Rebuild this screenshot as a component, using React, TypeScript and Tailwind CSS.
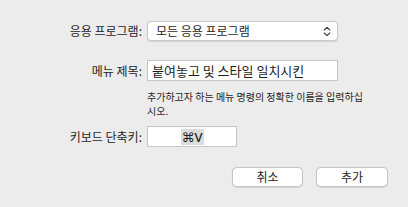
export default function App() {
  return (
    <div
      className="h-[207px] w-[408px] bg-[#ececec] text-[12px] text-[#1e1e1e]"
      style={{ fontFamily: '"Noto Sans CJK KR", "Noto Sans", sans-serif' }}
    >
      <div className="flex flex-col pt-[21px]">
        {/* 응용 프로그램 */}
        <div className="flex items-center gap-[5px]">
          <div className="w-[142px] text-right leading-none">응용 프로그램:</div>
          <div className="flex h-[20px] w-[191px] items-center justify-between rounded-[4px] border border-[#c9c9c9] bg-white pl-[8px] pr-[6px] shadow-[0_0.5px_1px_rgba(0,0,0,0.12)]">
            <span className="leading-none">모든 응용 프로그램</span>
            <svg width="8" height="11" viewBox="0 0 8 11" fill="none" stroke="#3a3a3a" strokeWidth="1.1" strokeLinecap="round" strokeLinejoin="round">
              <path d="M1.2 4 L4 1.3 L6.8 4" />
              <path d="M1.2 7 L4 9.7 L6.8 7" />
            </svg>
          </div>
        </div>

        {/* 메뉴 제목 */}
        <div className="mt-[19px] flex items-center gap-[5px]">
          <div className="w-[142px] text-right leading-none">메뉴 제목:</div>
          <div className="flex h-[21px] w-[191px] items-center border border-[#c6c6c6] bg-white px-[4px]">
            <span className="text-[13px] leading-none">붙여놓고 및 스타일 일치시킨</span>
          </div>
        </div>

        <div className="ml-[147px] mt-[9px] whitespace-nowrap text-[10px] leading-[14px]">
          추가하고자 하는 메뉴 명령의 정확한 이름을 입력하십
          <br />
          시오.
        </div>

        {/* 키보드 단축키 */}
        <div className="mt-[8px] flex items-center gap-[5px]">
          <div className="w-[142px] text-right leading-none">키보드 단축키:</div>
          <div className="flex h-[21px] w-[90px] items-center justify-center border border-[#c6c6c6] bg-white">
            <span
              className="bg-[#dcdcdc] px-[1px] text-[13px] font-medium leading-[16px]"
              style={{ fontFamily: '"Noto Sans", "DejaVu Sans", sans-serif' }}
            >
              ⌘V
            </span>
          </div>
        </div>

        {/* buttons */}
        <div className="mt-[20px] flex justify-end gap-[13px] pr-[20px]">
          <button className="h-[20px] w-[71px] rounded-[5px] border border-[#c4c4c4] bg-white text-[12px] leading-none shadow-[0_0.5px_1px_rgba(0,0,0,0.1)]">
            취소
          </button>
          <button className="h-[20px] w-[72px] rounded-[5px] border border-[#c4c4c4] bg-white text-[12px] leading-none shadow-[0_0.5px_1px_rgba(0,0,0,0.1)]">
            추가
          </button>
        </div>
      </div>
    </div>
  );
}
